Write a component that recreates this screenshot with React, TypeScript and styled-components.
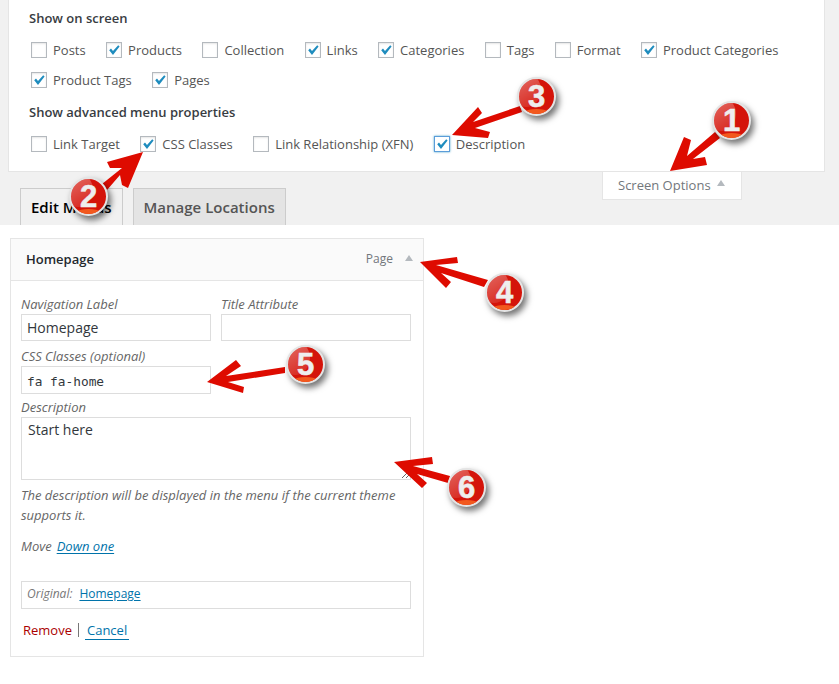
import React from "react";
import styled, { createGlobalStyle } from "styled-components";

const GlobalStyle = createGlobalStyle`
  html, body {
    margin: 0;
    padding: 0;
    background: #fff;
  }
  body {
    font-family: "Open Sans", "Liberation Sans", sans-serif;
    font-size: 13px;
    line-height: 20px;
    color: #555;
  }
`;

const Page = styled.div`
  position: relative;
  width: 839px;
  height: 684px;
  overflow: hidden;
`;

const TopArea = styled.div`
  height: 225px;
  background: #f1f1f1;
  padding-left: 8px;
  box-sizing: border-box;
  display: flex;
  flex-direction: column;
`;

const ScreenPanel = styled.div`
  width: 817px;
  height: 172px;
  box-sizing: border-box;
  background: #fff;
  border: 1px solid #e5e5e5;
  border-top: 0;
  padding: 8px 20px 0;
`;

const Heading = styled.div`
  font-weight: 600;
  line-height: 20px;
  color: #23282d;
  opacity: 0.9;
  margin: 0 0 7px;
  & ~ & {
    margin-top: 7px;
  }
`;

const CheckRow = styled.div`
  display: flex;
  flex-wrap: wrap;
  padding-left: 2px;
`;

const CheckItem = styled.div`
  display: flex;
  align-items: center;
  height: 30px;
  margin-right: 20.4px;
  gap: 6px;
`;

const Box = styled.span<{ $focus?: boolean }>`
  width: 16px;
  height: 16px;
  box-sizing: border-box;
  background: #fff;
  border: 1px solid ${(p) => (p.$focus ? "#5b9dd9" : "#b4b9be")};
  box-shadow: ${(p) =>
    p.$focus ? "0 0 2px rgba(30,140,190,.8)" : "inset 0 1px 2px rgba(0,0,0,.1)"};
  display: flex;
  align-items: center;
  justify-content: center;
`;

const BottomRow = styled.div`
  flex: 1;
  width: 817px;
  display: flex;
  align-items: flex-start;
`;

const Tabs = styled.div`
  align-self: flex-end;
  display: flex;
  gap: 10px;
  margin-left: 12px;
`;

const Tab = styled.div<{ $active?: boolean }>`
  height: 37px;
  box-sizing: border-box;
  padding: 0 10px;
  border: 1px solid #ccc;
  border-bottom: 0;
  background: ${(p) => (p.$active ? "#f1f1f1" : "#e4e4e4")};
  color: ${(p) => (p.$active ? "#000" : "#555")};
  font-size: 15px;
  font-weight: 600;
  line-height: 37px;
  white-space: nowrap;
`;

const OptionsTab = styled.div`
  margin-left: auto;
  margin-right: 83px;
  width: 140px;
  height: 28px;
  box-sizing: border-box;
  background: #fff;
  border: 1px solid #e5e5e5;
  border-top: 0;
  display: flex;
  align-items: center;
  padding: 0 0 2px 15px;
  gap: 6px;
  color: #72777c;
`;

const UpCaret = styled.span`
  width: 0;
  height: 0;
  border-left: 4.5px solid transparent;
  border-right: 4.5px solid transparent;
  border-bottom: 6px solid #b4b9be;
  margin-bottom: 3px;
`;

const MenuItem = styled.div`
  width: 414px;
  height: 419px;
  box-sizing: border-box;
  margin: 13px 0 0 10px;
  border: 1px solid #e5e5e5;
  background: #fff;
`;

const ItemHeader = styled.div`
  height: 42px;
  box-sizing: border-box;
  background: #fafafa;
  border-bottom: 1px solid #e5e5e5;
  display: flex;
  align-items: center;
  padding: 0 10px 1px 15px;
`;

const ItemTitle = styled.div`
  font-weight: 600;
  color: #23282d;
  flex: 1;
`;

const ItemType = styled.div`
  font-size: 12px;
  color: #72777c;
  margin-right: 12px;
`;

const ItemBody = styled.div`
  padding: 13px 12px 0 10px;
`;

const FieldRow = styled.div`
  display: flex;
  gap: 10px;
`;

const Field = styled.div`
  width: 190px;
  display: flex;
  flex-direction: column;
`;

const FieldLabel = styled.div<{ $gap?: number }>`
  font-style: italic;
  height: 20px;
  line-height: 20px;
  color: #666;
  margin-top: ${(p) => p.$gap ?? 0}px;
`;

const TextInput = styled.input<{ $mono?: boolean; $h: number }>`
  width: 190px;
  height: ${(p) => p.$h}px;
  box-sizing: border-box;
  border: 1px solid #ddd;
  outline: 0;
  padding: ${(p) => (p.$mono ? "2px 5px 0" : "0 5px")};
  margin: 0;
  color: #32373c;
  font-family: ${(p) =>
    p.$mono
      ? `"DejaVu Sans Mono", "Liberation Mono", monospace`
      : `"Open Sans", sans-serif`};
  font-size: ${(p) => (p.$mono ? "12.8px" : "14px")};
`;

const DescArea = styled.textarea`
  display: block;
  width: 390px;
  height: 63px;
  box-sizing: border-box;
  border: 1px solid #ddd;
  outline: 0;
  padding: 2px 6px;
  margin: 0;
  color: #32373c;
  font-family: "Open Sans", sans-serif;
  font-size: 14px;
  line-height: 20px;
`;

const Help = styled.div`
  font-style: italic;
  width: 390px;
  color: #666;
  margin-top: 5px;
`;

const MoveRow = styled.div`
  font-style: italic;
  color: #666;
  margin-top: 11px;
  display: flex;
  gap: 5px;
`;

const TextLink = styled.a`
  color: #0073aa;
  text-decoration: underline;
  text-underline-offset: 2px;
`;

const Original = styled.div`
  width: 390px;
  height: 28px;
  box-sizing: border-box;
  margin-top: 25px;
  border: 1px solid #ddd;
  padding: 0 5px 2px;
  display: flex;
  align-items: center;
  gap: 7px;
  font-size: 12px;
`;

const OriginalLabel = styled.span`
  font-style: italic;
  color: #777;
`;

const Actions = styled.div`
  margin-top: 11px;
  padding-left: 2px;
  display: flex;
  align-items: center;
`;

const RemoveLink = styled.a`
  color: #a00;
`;

const Sep = styled.span`
  width: 1px;
  height: 14px;
  background: #777;
  margin: 0 6px;
`;

const CancelLink = styled.a`
  color: #0073aa;
  padding: 0 2px;
  border-bottom: 1px solid #0073aa;
  line-height: 18px;
`;

const ArrowLayer = styled.svg`
  position: absolute;
  left: 0;
  top: 0;
`;

const Badge = styled.div<{ $x: number; $y: number }>`
  position: absolute;
  left: ${(p) => p.$x - 20}px;
  top: ${(p) => p.$y - 20}px;
  width: 39px;
  height: 39px;
  box-sizing: border-box;
  border-radius: 50%;
  border: 2px solid #e4e4e4;
  background: #d4140a;
  box-shadow: 3px 4px 6px rgba(0, 0, 0, 0.55);
  overflow: hidden;
  display: flex;
  align-items: center;
  justify-content: center;
  font-family: "Liberation Sans", Arial, sans-serif;
  font-weight: 700;
  font-size: 31px;
  line-height: 1;
  color: #eee;
  -webkit-text-stroke: 0.6px #eee;
  &::before {
    content: "";
    position: absolute;
    left: -8px;
    top: -6px;
    width: 30px;
    height: 34px;
    border-radius: 50%;
    background: linear-gradient(150deg, rgba(255, 255, 255, 0.42), rgba(255, 255, 255, 0.06));
  }
  &::after {
    content: "";
    position: absolute;
    left: 7px;
    right: 7px;
    bottom: 0;
    height: 5px;
    border-radius: 50% 50% 0 0;
    background: #f2591e;
  }
`;

const BadgeNum = styled.span`
  position: relative;
  z-index: 1;
`;

const Check = () => (
  <svg width="14" height="14" viewBox="0 0 14 14">
    <path d="M2.2 7.2 L4 5.6 L6 8 L11.2 2.2 L12.6 3.4 L6 12 Z" fill="#1e8cbe" />
  </svg>
);

const CheckOpt = ({ label, on, focus }: { label: string; on?: boolean; focus?: boolean }) => (
  <CheckItem>
    <Box $focus={focus}>{on && <Check />}</Box>
    <span>{label}</span>
  </CheckItem>
);

const arrows = [
  "670,171 684,137 691,140 687,156 715,132 720,138 693,159 705,157 707,165",
  "143,152 107,162 110,168 122,168 102,184 107,190 120,175 122,185 128,188",
  "452,135 478,107 482,113 473,122 520,106 522,112 475,128 490,132 488,138",
  "420,262 457,257 458,263 436,265 488,280 484,287 441,273 451,282 446,288",
  "207,382 236,360 241,366 226,376 285,367 285,373 228,382 244,387 243,393",
  "394,462 432,457 433,464 413,466 450,476 448,483 417,474 427,483 422,488",
];

const badges = [
  { n: 1, x: 732, y: 121 },
  { n: 2, x: 89, y: 197 },
  { n: 3, x: 537, y: 97 },
  { n: 4, x: 505, y: 293 },
  { n: 5, x: 306, y: 365 },
  { n: 6, x: 467, y: 488 },
];

const App = () => {
  return (
    <Page>
      <GlobalStyle />
      <TopArea>
        <ScreenPanel>
          <Heading>Show on screen</Heading>
          <CheckRow>
            <CheckOpt label="Posts" />
            <CheckOpt label="Products" on />
            <CheckOpt label="Collection" />
            <CheckOpt label="Links" on />
            <CheckOpt label="Categories" on />
            <CheckOpt label="Tags" />
            <CheckOpt label="Format" />
            <CheckOpt label="Product Categories" on />
            <CheckOpt label="Product Tags" on />
            <CheckOpt label="Pages" on />
          </CheckRow>
          <Heading>Show advanced menu properties</Heading>
          <CheckRow>
            <CheckOpt label="Link Target" />
            <CheckOpt label="CSS Classes" on />
            <CheckOpt label="Link Relationship (XFN)" />
            <CheckOpt label="Description" on focus />
          </CheckRow>
        </ScreenPanel>
        <BottomRow>
          <Tabs>
            <Tab $active>Edit Menus</Tab>
            <Tab>Manage Locations</Tab>
          </Tabs>
          <OptionsTab>
            Screen Options <UpCaret />
          </OptionsTab>
        </BottomRow>
      </TopArea>

      <MenuItem>
        <ItemHeader>
          <ItemTitle>Homepage</ItemTitle>
          <ItemType>Page</ItemType>
          <UpCaret />
        </ItemHeader>
        <ItemBody>
          <FieldRow>
            <Field>
              <FieldLabel>Navigation Label</FieldLabel>
              <TextInput $h={27} readOnly value="Homepage" />
            </Field>
            <Field>
              <FieldLabel>Title Attribute</FieldLabel>
              <TextInput $h={27} readOnly value="" />
            </Field>
          </FieldRow>
          <Field>
            <FieldLabel $gap={5}>CSS Classes (optional)</FieldLabel>
            <TextInput $h={28} $mono readOnly value="fa fa-home" />
          </Field>
          <FieldLabel $gap={3}>Description</FieldLabel>
          <DescArea readOnly value="Start here" />
          <Help>The description will be displayed in the menu if the current theme supports it.</Help>
          <MoveRow>
            Move <TextLink>Down one</TextLink>
          </MoveRow>
          <Original>
            <OriginalLabel>Original:</OriginalLabel>
            <TextLink>Homepage</TextLink>
          </Original>
          <Actions>
            <RemoveLink>Remove</RemoveLink>
            <Sep />
            <CancelLink>Cancel</CancelLink>
          </Actions>
        </ItemBody>
      </MenuItem>

      <ArrowLayer width="839" height="684" viewBox="0 0 839 684">
        {arrows.map((pts) => (
          <polygon key={pts} points={pts} fill="#de0b00" />
        ))}
      </ArrowLayer>
      {badges.map((b) => (
        <Badge key={b.n} $x={b.x} $y={b.y}>
          <BadgeNum>{b.n}</BadgeNum>
        </Badge>
      ))}
    </Page>
  );
};

export default App;
